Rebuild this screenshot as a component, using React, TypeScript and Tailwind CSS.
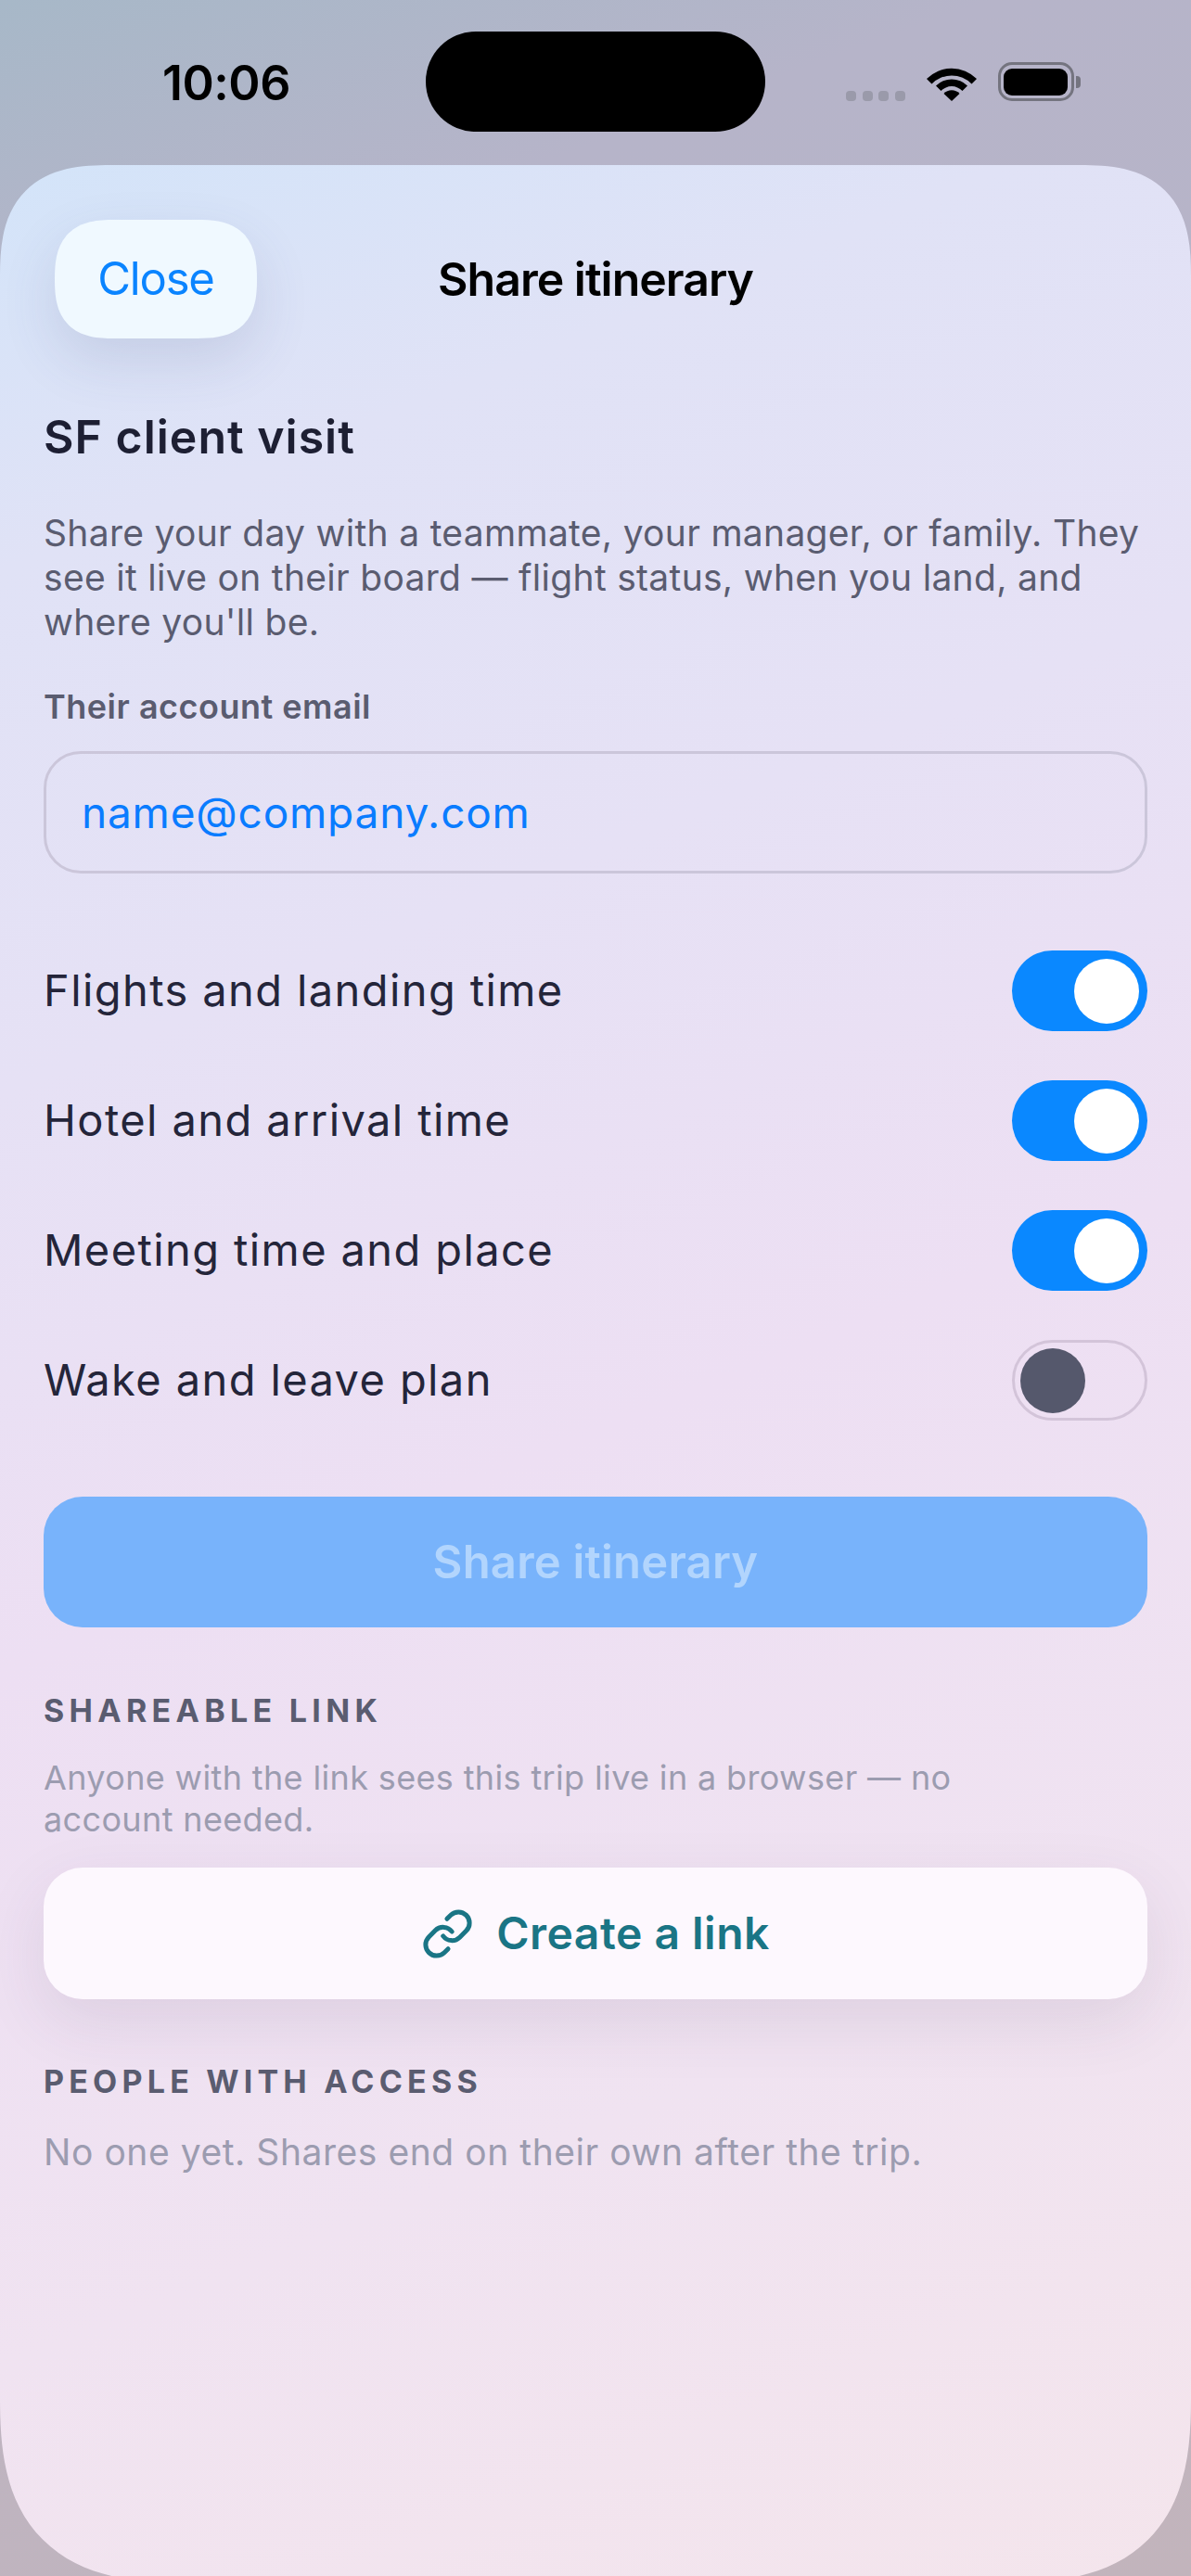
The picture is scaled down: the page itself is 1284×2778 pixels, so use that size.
import React from 'react'
import { Link } from 'lucide-react'

const rows = [
  { label: 'Flights and landing time', on: true },
  { label: 'Hotel and arrival time', on: true },
  { label: 'Meeting time and place', on: true },
  { label: 'Wake and leave plan', on: false },
]

function Toggle ({ on }: { on: boolean }) {
  if (on) {
    return (
      <span className="flex h-[87px] w-[146px] items-center justify-end rounded-full bg-[#0a88ff] pr-[9px]">
        <span className="size-[70px] rounded-full bg-white"/>
      </span>
    )
  }
  return (
    <span className="flex h-[87px] w-[146px] items-center rounded-full border-[3px] border-[#d3c4d9] pl-[6px]">
      <span className="size-[70px] rounded-full bg-[#55586c]"/>
    </span>
  )
}

function StatusBar () {
  return (
    <div className="flex h-[178px] items-start pt-[34px]">
      <div className="flex h-[108px] w-[459px] items-center pt-[4px] pl-[175px] text-[52px] font-semibold tracking-[-0.5px] text-black">
        10:06
      </div>
      <div className="h-[108px] w-[366px] rounded-[54px] bg-black"/>
      <div className="flex h-[108px] items-center pl-[87px]">
        <div className="mt-[31px] flex gap-[6.5px]">
          <span className="h-[11px] w-[11px] rounded-[4px] bg-[#9a9aaa]"/>
          <span className="h-[11px] w-[11px] rounded-[4px] bg-[#9a9aaa]"/>
          <span className="h-[11px] w-[11px] rounded-[4px] bg-[#9a9aaa]"/>
          <span className="h-[11px] w-[11px] rounded-[4px] bg-[#9a9aaa]"/>
        </div>
        <svg className="ml-[22px]" width="56" height="41" viewBox="0 0 56 41">
          <path d="M1 17 A38 38 0 0 1 55 17 L49.5 22.5 A30 30 0 0 0 6.5 22.5 Z" fill="#000"/>
          <path d="M11 27 A24 24 0 0 1 45 27 L39.5 32.5 A16 16 0 0 0 16.5 32.5 Z" fill="#000" transform="translate(0 -2.5)"/>
          <path d="M19.5 33 A11.5 11.5 0 0 1 36.5 33 L28 41 Z" fill="#000"/>
        </svg>
        <div className="ml-[22px] flex items-center">
          <div className="flex h-[42px] w-[82px] items-center justify-center rounded-[15px] border-[3px] border-[#74747f]">
            <div className="h-[29px] w-[69px] rounded-[9px] bg-black"/>
          </div>
          <div className="ml-[2px] h-[13px] w-[5px] rounded-r-[4px] bg-[#74747f]"/>
        </div>
      </div>
    </div>
  )
}

export default function App () {
  return (
    <div className="h-[2778px] w-[1284px] overflow-hidden bg-[linear-gradient(160deg,#a7b8c8_0%,#b6b4c9_12%,#b9b4c6_50%,#c2b4bc_100%)] font-['Inter',sans-serif]">
      <StatusBar/>
      <div className="h-[2607px] rounded-t-[120px] rounded-b-[200px] bg-[linear-gradient(158deg,#d3e4f9_0%,#e0e2f6_14%,#e6e1f5_32%,#eddff3_52%,#f0e3f1_76%,#f4e5ec_100%)] px-[47px] pt-[59px] [corner-shape:superellipse(1.4)]">
        <div className="flex items-center">
          <div className="flex-1">
            <button className="ml-[12px] h-[128px] w-[218px] rounded-[64px] bg-[#f0f9ff] text-[49px] tracking-[-1.2px] text-[#0a84ff] shadow-[0_24px_60px_rgba(70,80,130,0.14)] [corner-shape:superellipse(1.4)]">
              Close
            </button>
          </div>
          <h1 className="text-[50px] font-semibold tracking-[-1px] text-black">Share itinerary</h1>
          <div className="flex-1"/>
        </div>

        <h2 className="mt-[76px] text-[50px] leading-[60px] font-semibold tracking-[1px] text-[#1d1f33]">SF client visit</h2>
        <p className="mt-[50px] text-[39px] leading-[48px] tracking-[0.3px] text-[#5a5c70]">
          Share your day with a teammate, your manager, or family. They see it live on their board — flight status, when you land, and where you'll be.
        </p>

        <label className="mt-[45px] block text-[36px] leading-[44px] font-semibold tracking-[0.5px] text-[#5a5c70]">Their account email</label>
        <input
          placeholder="name@company.com"
          className="mt-[26px] h-[132px] w-full rounded-[40px] border-[3px] border-[#cbc6da] px-[38px] text-[46px] tracking-[0.8px] outline-none placeholder:text-[#0a7cff]"
        />

        <div className="mt-[83px] flex flex-col gap-[53px]">
          {rows.map(row => (
            <div key={row.label} className="flex items-center justify-between">
              <span className="text-[47px] tracking-[1.4px] text-[#24253a]">{row.label}</span>
              <Toggle on={row.on}/>
            </div>
          ))}
        </div>

        <button className="mt-[82px] h-[141px] w-full rounded-[42px] bg-[#78b3fb] text-[49px] font-semibold tracking-[0.2px] text-[#b2d5fd]">
          Share itinerary
        </button>

        <div className="mt-[70px] text-[34px] leading-[40px] font-bold tracking-[5.3px] text-[#5a5c70]">SHAREABLE LINK</div>
        <p className="mt-[30px] w-[1040px] text-[36px] leading-[45px] tracking-[0.36px] text-[#9c9cb0]">
          Anyone with the link sees this trip live in a browser — no account needed.
        </p>

        <button className="mt-[29px] flex h-[142px] w-full items-center justify-center gap-[24px] rounded-[42px] bg-[#fdf8fe] text-[48px] font-semibold tracking-[0.5px] text-[#1a7585] shadow-[0_24px_70px_rgba(70,50,90,0.1)]">
          <Link size={57} strokeWidth={2.1}/>
          Create a link
        </button>

        <div className="mt-[69px] text-[34px] leading-[40px] font-bold tracking-[5.2px] text-[#5a5c70]">PEOPLE WITH ACCESS</div>
        <p className="mt-[33px] text-[39px] leading-[45px] tracking-[0.55px] text-[#9c9cb0]">No one yet. Shares end on their own after the trip.</p>
      </div>
    </div>
  )
}
